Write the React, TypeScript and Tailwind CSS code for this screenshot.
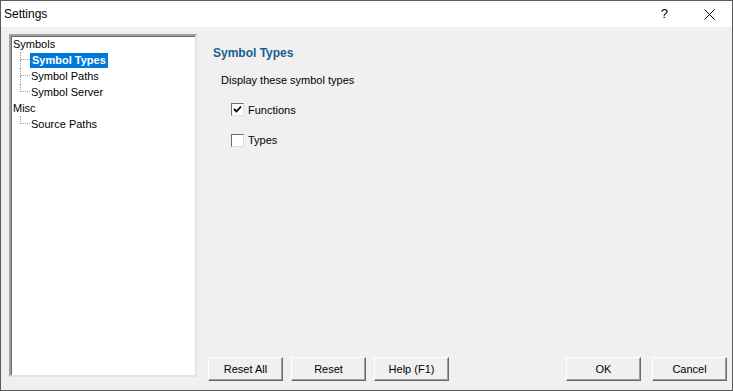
import React from "react";

type Node = { label: string; selected?: boolean; children?: Node[] };

const tree: Node[] = [
  {
    label: "Symbols",
    children: [
      { label: "Symbol Types", selected: true },
      { label: "Symbol Paths" },
      { label: "Symbol Server" },
    ],
  },
  { label: "Misc", children: [{ label: "Source Paths" }] },
];

function Label({ node }: { node: Node }) {
  return node.selected ? (
    <span className="h-[15px] px-[2px] leading-[15px] bg-[#0078d7] text-white font-bold">
      {node.label}
    </span>
  ) : (
    <span className="h-[15px] px-[1px] leading-[15px] text-black">{node.label}</span>
  );
}

function Tree() {
  return (
    <div className="flex flex-col">
      {tree.map((n) => (
        <div key={n.label} className="flex flex-col">
          <div className="h-4 flex items-center">
            <Label node={n} />
          </div>
          {n.children?.map((c, i) => {
            const last = i === (n.children?.length ?? 0) - 1;
            return (
              <div key={c.label} className="h-4 flex items-center">
                <div className="ml-[8px] w-[10px] h-4 flex flex-col">
                  <div className="h-2 border-l border-b border-dotted border-[#a0a0a0]" />
                  <div className={last ? "h-2" : "h-2 border-l border-dotted border-[#a0a0a0]"} />
                </div>
                <Label node={c} />
              </div>
            );
          })}
        </div>
      ))}
    </div>
  );
}

function CheckBox({ checked, label }: { checked?: boolean; label: string }) {
  return (
    <div className="flex items-center gap-[4px]">
      <div className="w-[13px] h-[13px] bg-white border border-t-[#6d6d6d] border-l-[#6d6d6d] border-b-[#dcdcdc] border-r-[#dcdcdc] flex items-center justify-center">
        {checked && (
          <svg width="9" height="9" viewBox="0 0 9 9">
            <path d="M1 4 L3.5 6.5 L8 1.5" stroke="#000" strokeWidth="1.8" fill="none" />
          </svg>
        )}
      </div>
      <span>{label}</span>
    </div>
  );
}

function Btn({ children, className = "" }: { children: React.ReactNode; className?: string }) {
  return (
    <button
      className={`w-[75px] h-[24px] bg-[#f0f0f0] border-t border-l border-white border-b border-r border-b-[#696969] border-r-[#696969] shadow-[inset_-1px_-1px_0_#a0a0a0] text-black text-[11px] ${className}`}
    >
      {children}
    </button>
  );
}

export default function App() {
  return (
    <div
      className="w-[733px] h-[391px] border border-[#5a5a5a] bg-[#f0f0f0] flex flex-col text-[11px] text-black"
      style={{ fontFamily: '"Liberation Sans", Arial, sans-serif' }}
    >
      <div className="h-[26px] bg-white flex items-center pl-[3px]">
        <span className="text-[12px] flex-1">Settings</span>
        <span className="text-[13px] mr-[36px]">?</span>
        <svg width="11" height="11" viewBox="0 0 11 11" className="mr-[17px]">
          <path d="M0.5 0.5 L10.5 10.5 M10.5 0.5 L0.5 10.5" stroke="#000" strokeWidth="1" />
        </svg>
      </div>
      <div className="flex-1 flex pl-[8px] pt-[7px] pb-[9px]">
        <div className="w-[188px] h-[343px] bg-white border-2 border-t-[#a0a0a0] border-l-[#a0a0a0] border-b-[#e3e3e3] border-r-[#e3e3e3] shadow-[inset_1px_1px_0_#696969] pl-[1px]">
          <Tree />
        </div>
        <div className="flex-1 flex flex-col pl-[11px] pr-[5px]">
          <div className="pl-[5px] pt-[10px] text-[12px] font-bold text-[#175e8f]">Symbol Types</div>
          <div className="pl-[13px] pt-[10px]">Display these symbol types</div>
          <div className="pl-[23px] pt-[13px] flex flex-col gap-[14px]">
            <CheckBox checked label="Functions" />
            <CheckBox label="Types" />
          </div>
          <div className="mt-auto flex gap-[8px]">
            <Btn>Reset All</Btn>
            <Btn>Reset</Btn>
            <Btn>Help (F1)</Btn>
            <Btn className="ml-auto mr-[3px]">OK</Btn>
            <Btn>Cancel</Btn>
          </div>
        </div>
      </div>
    </div>
  );
}
